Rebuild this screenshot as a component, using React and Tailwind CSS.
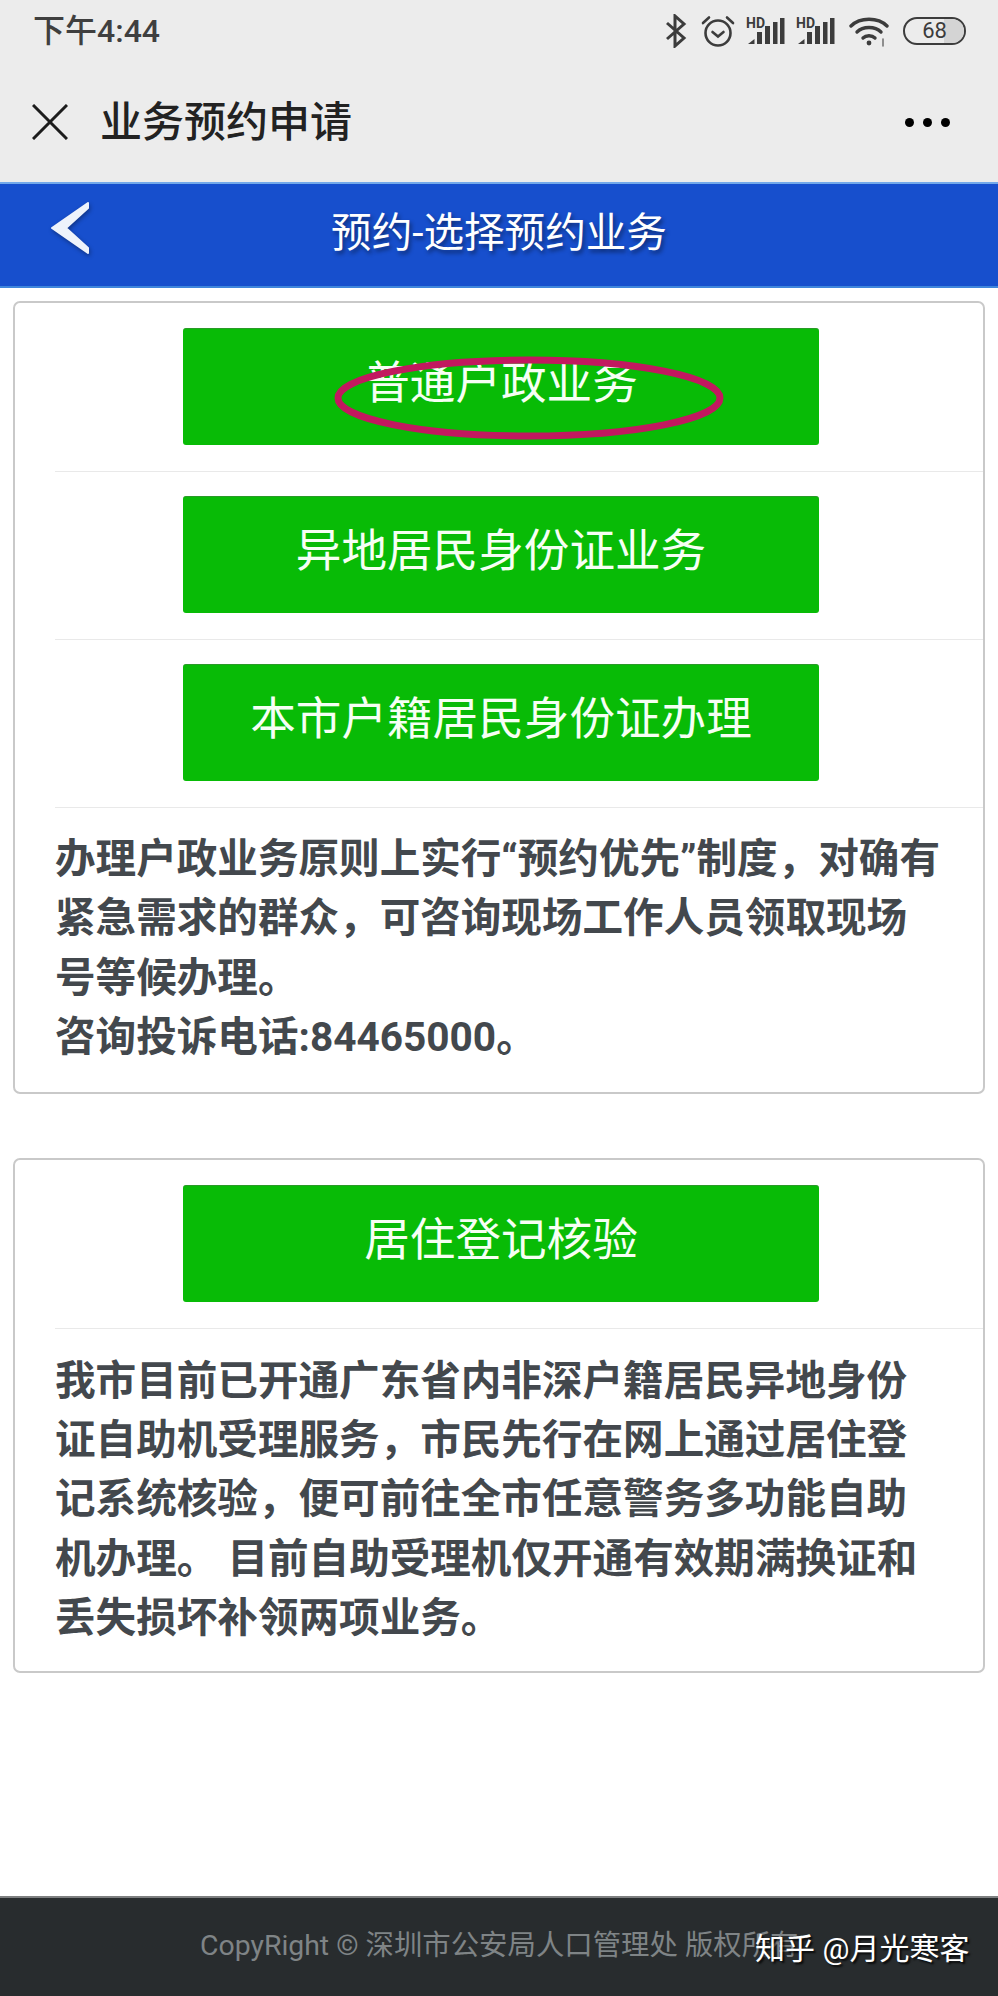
const CJK = { fontFamily: 'Roboto, "Noto Sans CJK SC", "Noto Sans", sans-serif' };
const C = '\uFF0C';

function Signal() {
  return (
    <svg width="39" height="32" viewBox="0 0 39 32" fill="#3c3c3c">
      <text x="0" y="12.5" fontSize="14" fontWeight="700" fontFamily="Roboto, sans-serif">HD</text>
      <path d="M2 29 L8.5 24 V29 Z" />
      <rect x="11" y="17" width="5" height="12" />
      <rect x="19" y="11" width="5" height="18" />
      <rect x="27" y="7" width="4.5" height="22" />
      <rect x="34" y="3" width="4.5" height="26" />
    </svg>
  );
}

function StatusIcons() {
  return (
    <div className="flex items-center">
      <svg width="22" height="34" viewBox="0 0 22 34" fill="none" stroke="#3c3c3c" strokeWidth="3">
        <path d="M2 9 L19 24 L10 32 V2 L19 10 L2 25" />
      </svg>
      <svg className="ml-[14px]" width="34" height="32" viewBox="0 0 34 32" fill="none" stroke="#3c3c3c" strokeWidth="2.6" strokeLinecap="round">
        <circle cx="17" cy="18" r="12.5" />
        <path d="M11.5 17 L17 21.5 L22.5 17" />
        <path d="M2 8 L8 2.5 M32 8 L26 2.5" />
      </svg>
      <div className="ml-[11px]"><Signal /></div>
      <div className="ml-[11px]"><Signal /></div>
      <svg className="ml-[14px]" width="40" height="32" viewBox="0 0 40 32" fill="none" stroke="#3c3c3c" strokeLinecap="round">
        <path d="M2 11 C11 2 29 2 38 11" strokeWidth="3.4" />
        <path d="M8 17 C14 11 26 11 32 17" strokeWidth="3.4" />
        <path d="M14 23 C17 20 23 20 26 23" strokeWidth="3.4" />
        <circle cx="20" cy="28" r="2.4" fill="#3c3c3c" stroke="none" />
        <path d="M34 24 V31" stroke="#777" strokeWidth="1.6" />
      </svg>
      <div className="ml-[14px] relative w-[63px] h-[28px] rounded-full border-[2px] border-[#3c3c3c] flex items-center justify-center overflow-hidden">
        <div className="absolute right-0 top-0 bottom-0 w-[20px] bg-[#d4d4d4]" />
        <span className="relative text-[22px] leading-none text-[#3c3c3c]">68</span>
      </div>
    </div>
  );
}

function Header() {
  return (
    <div className="bg-[#ececec]">
      <div className="h-[62px] pl-[33px] pr-[32px] flex items-center justify-between">
        <span className="text-[32px] leading-none font-medium text-[#3f3f3f]">下午4:44</span>
        <StatusIcons />
      </div>
      <div className="h-[120px] pl-[32px] pr-[48px] flex items-center justify-between">
        <div className="flex items-center">
          <svg width="36" height="36" viewBox="0 0 36 36" fill="none" stroke="#1c1c1c" strokeWidth="3">
            <path d="M1 1 L35 35 M35 1 L1 35" />
          </svg>
          <span className="ml-[32px] pt-[2px] text-[42px] leading-none font-medium text-[#222]">业务预约申请</span>
        </div>
        <div className="flex items-center gap-[9px]">
          <span className="w-[9px] h-[9px] rounded-full bg-black" />
          <span className="w-[9px] h-[9px] rounded-full bg-black" />
          <span className="w-[9px] h-[9px] rounded-full bg-black" />
        </div>
      </div>
    </div>
  );
}

function BlueBar() {
  return (
    <div className="relative h-[106px] bg-[#174fcd] border-t-[2px] border-b-[2px] border-t-[#73a9ea] border-b-[#3f86dc] flex items-center justify-center">
      <svg className="absolute left-[47px] top-[17px]" width="44" height="54" viewBox="0 0 44 54" style={{ filter: 'drop-shadow(1px 2px 2px rgba(0,0,0,.35))' }}>
        <path d="M41 2 L5 27 L41 52 L41 47 L19 27 L41 7 Z" fill="#eef3fb" stroke="#eef3fb" strokeWidth="2" strokeLinejoin="round" />
      </svg>
      <span className="pb-[3px] text-[40.6px] leading-none text-white [text-shadow:2px_3px_4px_rgba(0,0,0,0.45)]">预约-选择预约业务</span>
    </div>
  );
}

function ActionRow({ label }) {
  return (
    <div className="ml-[40px] pt-[24px] pb-[26px] border-b border-[#e9e9e9]">
      <div className="w-[636px] ml-[128px] h-[117px] pb-[6px] rounded-[3px] bg-[#08bb06] border-t border-t-[#2a9a28] flex items-center justify-center text-[45.6px] leading-none text-[#f6fff4]">
        {label}
      </div>
    </div>
  );
}

function Paragraph({ lines }) {
  return (
    <p className="ml-[40px] text-[40.6px] leading-[59.4px] font-bold text-[#43484d] whitespace-nowrap">
      {lines.map((line) => (
        <span key={line} className="block">{line}</span>
      ))}
    </p>
  );
}

function Card({ className, children }) {
  return (
    <section className={'mx-[13px] border-[2px] border-[#c9c9c9] rounded-[7px] bg-white ' + className}>{children}</section>
  );
}

export default function App() {
  return (
    <div className="relative w-[998px] min-h-[1996px] flex flex-col bg-white overflow-hidden" style={CJK}>
      <Header />
      <BlueBar />
      <main className="flex-1">
        <Card className="mt-[13px] pt-[1px] pb-[24px]">
          <ActionRow label="普通户政业务" />
          <ActionRow label="异地居民身份证业务" />
          <ActionRow label="本市户籍居民身份证办理" />
          <div className="pt-[22px]">
            <Paragraph
              lines={[
                `办理户政业务原则上实行“预约优先”制度${C}对确有`,
                `紧急需求的群众${C}可咨询现场工作人员领取现场`,
                '号等候办理。',
                '咨询投诉电话:84465000。',
              ]}
            />
          </div>
        </Card>
        <Card className="mt-[64px] pt-[1px] pb-[22px]">
          <ActionRow label="居住登记核验" />
          <div className="pt-[23px]">
            <Paragraph
              lines={[
                '我市目前已开通广东省内非深户籍居民异地身份',
                `证自助机受理服务${C}市民先行在网上通过居住登`,
                `记系统核验${C}便可前往全市任意警务多功能自助`,
                '机办理。 目前自助受理机仅开通有效期满换证和',
                '丢失损坏补领两项业务。',
              ]}
            />
          </div>
        </Card>
      </main>
      <footer className="h-[100px] bg-[#282c2e] border-t-[2px] border-t-[#7d7f80] pl-[200px] pt-[30px]">
        <span className="text-[28.4px] leading-[36px] text-[#7f8486] whitespace-nowrap">CopyRight © 深圳市公安局人口管理处 版权所有</span>
      </footer>
      <span className="absolute left-[755px] top-[1931px] text-[30px] leading-[36px] text-white whitespace-nowrap [text-shadow:2px_2px_2px_rgba(0,0,0,0.8)]">知乎 @月光寒客</span>
      <svg className="absolute left-[330px] top-[352px]" width="400" height="94" viewBox="0 0 400 94" fill="none">
        <ellipse cx="199" cy="46" rx="191" ry="38" stroke="#c2185f" strokeWidth="7" />
      </svg>
    </div>
  );
}
